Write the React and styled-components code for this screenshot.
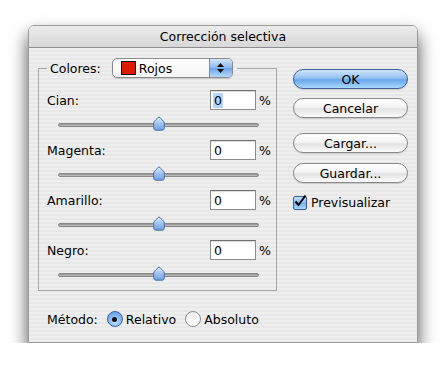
import React from "react";
import styled, { createGlobalStyle } from "styled-components";

const GlobalStyle = createGlobalStyle`
  body {
    margin: 0;
    background: #ffffff;
    font-family: "DejaVu Sans", "Liberation Sans", sans-serif;
    font-size: 12.5px;
    color: #000;
  }
`;

const Page = styled.div`
  padding: 25px 0 0 28px;
`;

const Window = styled.div`
  width: 390px;
  height: 318px;
  box-sizing: border-box;
  border: 1px solid #9a9a9a;
  border-radius: 6px 6px 0 0;
  overflow: hidden;
  box-shadow: 0 10px 18px rgba(0, 0, 0, 0.7);
  display: flex;
  flex-direction: column;
`;

const TitleBar = styled.div`
  height: 21px;
  flex: none;
  display: flex;
  align-items: center;
  justify-content: center;
  background: linear-gradient(#ececec, #d8d8d8);
  border-bottom: 1px solid #8e8e8e;
`;

const Body = styled.div`
  flex: 1;
  display: flex;
  gap: 16px;
  padding: 10px 10px 0 9px;
  background: repeating-linear-gradient(
    to bottom,
    #eeeeee 0,
    #eeeeee 2px,
    #e8e8e8 2px,
    #e8e8e8 4px
  );
`;

const LeftCol = styled.div`
  width: 239px;
  display: flex;
  flex-direction: column;
`;

const Group = styled.fieldset`
  margin: 0;
  padding: 0 8px;
  min-width: 0;
  border: 1px solid #a8a8a8;
  box-sizing: border-box;
  width: 239px;
`;

const Legend = styled.legend`
  margin-left: 0;
  padding: 0 4px 0 3px;
  display: flex;
  align-items: center;
  height: 20px;
`;

const Popup = styled.div`
  margin-left: 11px;
  width: 121px;
  height: 20px;
  box-sizing: border-box;
  border: 1px solid #8a8a8a;
  border-radius: 5px;
  background: linear-gradient(#ffffff, #f3f3f3);
  display: flex;
  align-items: center;
  overflow: hidden;
  box-shadow: 0 1px 1px rgba(0, 0, 0, 0.15);
`;

const Swatch = styled.span`
  width: 13px;
  height: 12px;
  margin-left: 8px;
  background: #e01a00;
  border: 1px solid #000;
`;

const PopupText = styled.span`
  flex: 1;
  padding-left: 3px;
`;

const PopupArrows = styled.span`
  width: 22px;
  height: 100%;
  border-left: 1px solid #6b8fc4;
  background: linear-gradient(#d2e4fb, #8bb8ef 50%, #6aa3ea 51%, #b4dafc);
  display: flex;
  flex-direction: column;
  align-items: center;
  justify-content: center;
  gap: 2px;
`;

const Block = styled.div`
  padding-top: ${(p) => (p.$first ? 12 : 0)}px;
`;

const ValueRow = styled.div`
  display: flex;
  align-items: center;
  height: 20px;
`;

const Label = styled.span`
  flex: 1;
`;

const ValueBox = styled.div`
  width: 46px;
  height: 20px;
  box-sizing: border-box;
  border: 1px solid #8c8c8c;
  border-top-color: #6e6e6e;
  background: #fff;
  display: flex;
  align-items: center;
  padding-left: 2px;
  box-shadow: inset 0 1px 1px rgba(0, 0, 0, 0.15);
`;

const Selected = styled.span`
  background: ${(p) => (p.$on ? "#b5d5ff" : "transparent")};
  padding: 0 1px;
  line-height: 15px;
`;

const Percent = styled.span`
  width: 12px;
  box-sizing: border-box;
  padding-left: 3px;
`;

const SliderArea = styled.div`
  position: relative;
  height: 30px;
  margin-left: 11px;
  width: 201px;
`;

const Track = styled.div`
  position: absolute;
  left: 0;
  right: 0;
  top: 13px;
  height: 4px;
  border-radius: 2px;
  background: linear-gradient(#8f8f8f, #c4c4c4);
  border: 1px solid #888;
  box-sizing: border-box;
`;

const Thumb = styled.svg`
  position: absolute;
  top: 6px;
  left: ${(p) => p.$pos}%;
  transform: translateX(-50%);
`;

const MethodRow = styled.div`
  margin-top: 18px;
  height: 20px;
  display: flex;
  align-items: center;
  padding-left: 9px;
`;

const RadioLabel = styled.label`
  display: flex;
  align-items: center;
  margin-left: ${(p) => p.$gap}px;
  gap: 3px;
`;

const Radio = styled.span`
  width: 16px;
  height: 16px;
  box-sizing: border-box;
  border-radius: 50%;
  border: 1px solid ${(p) => (p.$on ? "#3c63a0" : "#8f8f8f")};
  background: ${(p) =>
    p.$on
      ? "radial-gradient(circle at 50% 70%, #bfe3ff, #79b1ee 60%, #5d93d9)"
      : "linear-gradient(#ededed, #ffffff)"};
  display: flex;
  align-items: center;
  justify-content: center;
  &::after {
    content: "";
    width: 5px;
    height: 5px;
    border-radius: 50%;
    background: #111;
    display: ${(p) => (p.$on ? "block" : "none")};
  }
`;

const RightCol = styled.div`
  width: 115px;
  display: flex;
  flex-direction: column;
  padding-top: 11px;
`;

const Button = styled.button`
  width: 115px;
  height: 20px;
  margin-top: ${(p) => p.$gap || 0}px;
  padding: 0;
  border-radius: 10px;
  font: inherit;
  color: #000;
  border: 1px solid ${(p) => (p.$primary ? "#3f5f96" : "#8a8a8a")};
  background: ${(p) =>
    p.$primary
      ? "linear-gradient(#cfe4fb, #93c0f1 45%, #6aa6ec 55%, #a8dafc)"
      : "linear-gradient(#ffffff, #f4f4f4 45%, #e3e3e3 55%, #fbfbfb)"};
  box-shadow: 0 1px 1px rgba(0, 0, 0, 0.15);
`;

const CheckRow = styled.label`
  margin-top: 12px;
  display: flex;
  align-items: center;
  gap: 4px;
`;

const CheckBox = styled.span`
  width: 14px;
  height: 14px;
  box-sizing: border-box;
  border: 1px solid #3c5f98;
  border-radius: 2px;
  background: linear-gradient(#c4e0fc, #7eb3ee 55%, #a8d5fb);
  position: relative;
`;

const channels = ["Cian", "Magenta", "Amarillo", "Negro"];

const SliderThumb = () => (
  <Thumb $pos={50} width="13" height="15" viewBox="0 0 13 15">
    <defs>
      <linearGradient id="thumbFill" x1="0" y1="0" x2="0" y2="1">
        <stop offset="0" stopColor="#e4efff" />
        <stop offset="0.5" stopColor="#9fc2f0" />
        <stop offset="1" stopColor="#6e9fe2" />
      </linearGradient>
    </defs>
    <path
      d="M6.5 0.8 C8 2.5 11.8 5 11.8 7 L11.8 12 Q11.8 14.2 9.6 14.2 L3.4 14.2 Q1.2 14.2 1.2 12 L1.2 7 C1.2 5 5 2.5 6.5 0.8 Z"
      fill="url(#thumbFill)"
      stroke="#4f6f9f"
      strokeWidth="1"
    />
  </Thumb>
);

export default function App() {
  return (
    <>
      <GlobalStyle />
      <Page>
        <Window>
          <TitleBar>Corrección selectiva</TitleBar>
          <Body>
            <LeftCol>
              <Group>
                <Legend>
                  Colores:
                  <Popup>
                    <Swatch />
                    <PopupText>Rojos</PopupText>
                    <PopupArrows>
                      <svg width="7" height="4" viewBox="0 0 7 4">
                        <path d="M3.5 0 L7 4 L0 4 Z" fill="#111" />
                      </svg>
                      <svg width="7" height="4" viewBox="0 0 7 4">
                        <path d="M0 0 L7 0 L3.5 4 Z" fill="#111" />
                      </svg>
                    </PopupArrows>
                  </Popup>
                </Legend>
                {channels.map((name, i) => (
                  <Block key={name} $first={i === 0}>
                    <ValueRow>
                      <Label>{name}:</Label>
                      <ValueBox>
                        <Selected $on={i === 0}>0</Selected>
                      </ValueBox>
                      <Percent>%</Percent>
                    </ValueRow>
                    <SliderArea>
                      <Track />
                      <SliderThumb />
                    </SliderArea>
                  </Block>
                ))}
              </Group>
              <MethodRow>
                Método:
                <RadioLabel $gap={9}>
                  <Radio $on />
                  Relativo
                </RadioLabel>
                <RadioLabel $gap={9}>
                  <Radio />
                  Absoluto
                </RadioLabel>
              </MethodRow>
            </LeftCol>
            <RightCol>
              <Button $primary>OK</Button>
              <Button $gap={9}>Cancelar</Button>
              <Button $gap={15}>Cargar...</Button>
              <Button $gap={10}>Guardar...</Button>
              <CheckRow>
                <CheckBox>
                  <svg
                    width="14"
                    height="14"
                    viewBox="0 0 14 14"
                    style={{ position: "absolute", left: -1, top: -3 }}
                  >
                    <path
                      d="M2.5 7.5 L5.5 11 L12.5 1.5"
                      fill="none"
                      stroke="#000"
                      strokeWidth="2"
                    />
                  </svg>
                </CheckBox>
                Previsualizar
              </CheckRow>
            </RightCol>
          </Body>
        </Window>
      </Page>
    </>
  );
}
